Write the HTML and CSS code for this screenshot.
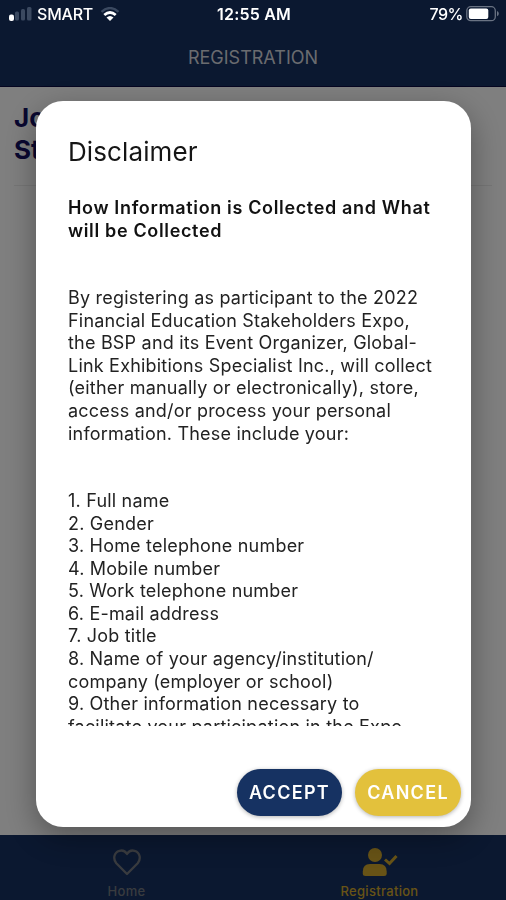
FILE: index.html
```html
<!DOCTYPE html>
<html lang="en">
<head>
  <meta charset="utf-8">
  <title>Registration</title>
  <link rel="stylesheet" href="styles.css">
</head>
<body>
<div class="status-bar">
  <div class="carrier">
    <svg class="signal" width="23" height="16" viewBox="0 0 23 16">
      <rect x="0" y="8.500" width="5" height="6.500" rx="2" fill="#fff"/>
      <rect x="6" y="5.500" width="4" height="9" rx="1.5" fill="#3b4960"/>
      <rect x="12" y="3" width="4" height="11.500" rx="1.5" fill="#3b4960"/>
      <rect x="18" y="1" width="4.5" height="13.500" rx="1.5" fill="#3b4960"/>
    </svg>
    <span class="carrier-name">SMART</span>
    <svg class="wifi" width="20" height="15" viewBox="0 0 20 15">
      <path d="M1.5 4.8Q10 -2.6 18.500 4.8" fill="none" stroke="#3b4960" stroke-width="2.400"/>
      <path d="M4.300 8Q10 3 15.700 8" fill="none" stroke="#fff" stroke-width="2.800"/>
      <path d="M6.500 10.500Q10 7.500 13.500 10.500L10 14z" fill="#fff"/>
    </svg>
  </div>
  <span class="time">12:55 AM</span>
  <div class="power">
    <span class="percent">79%</span>
    <svg width="33" height="16" viewBox="0 0 33 16">
      <rect x="0.800" y="0.700" width="28.500" height="14" rx="4" fill="none" stroke="#6a7383" stroke-width="1.300"/>
      <rect x="2.800" y="2.400" width="19.500" height="10.600" rx="2" fill="#fff"/>
      <path d="M31 5.100q1.800 .8 1.800 2.600t-1.800 2.600z" fill="#6a7383"/>
    </svg>
  </div>
</div>

<div class="app">
  <header class="header">REGISTRATION</header>
  <main class="page">
    <h2 class="page-title">Jo<br>St</h2>
  </main>
  <nav class="tabs">
    <a class="tab">
      <svg width="28" height="28" viewBox="0 0 28 28">
        <path d="M14 26L3.300 15.200C-.2 11 .8 4.300 6.500 2.800 9.800 1.900 12.400 3.400 14 6c1.600-2.600 4.200-4.100 7.500-3.200C27.200 4.300 28.200 11 24.700 15.200z" fill="none" stroke="currentColor" stroke-width="2.300" stroke-linejoin="round"/>
      </svg>
      <span>Home</span>
    </a>
    <a class="tab active">
      <svg width="36" height="28" viewBox="0 0 36 28">
        <circle cx="13" cy="7" r="7" fill="currentColor"/>
        <path d="M.8 25.500V23.500Q.8 16 8 16H17.500Q24.700 16 24.700 23.500V25.500Q24.700 28 22 28H3.500Q.8 28 .8 25.500z" fill="currentColor"/>
        <path d="M23 11.500L27.500 15.500L34.500 8" fill="none" stroke="currentColor" stroke-width="3"/>
      </svg>
      <span>Registration</span>
    </a>
  </nav>
</div>

<div class="overlay">
  <div class="popup">
    <h1>Disclaimer</h1>
    <div class="content">
      <p class="heading">How Information is Collected and What<br>will be Collected</p>
      <p>By registering as participant to the 2022<br>Financial Education Stakeholders Expo,<br>the BSP and its Event Organizer, Global-<br>Link Exhibitions Specialist Inc., will collect<br>(either manually or electronically), store,<br>access and/or process your personal<br>information. These include your:</p>
      <p>1. Full name<br>2. Gender<br>3. Home telephone number<br>4. Mobile number<br>5. Work telephone number<br>6. E-mail address<br>7. Job title<br>8. Name of your agency/institution/<br>company (employer or school)<br>9. Other information necessary to<br>facilitate your participation in the Expo</p>
    </div>
    <div class="buttons">
      <button class="accept">ACCEPT</button>
      <button class="cancel">CANCEL</button>
    </div>
  </div>
</div>
</body>
</html>
```

FILE: styles.css
```css
* {
    box-sizing: border-box;
}

body {
    margin: 0;
    height: 900px;
    overflow: hidden;
    font-family: Inter, "Liberation Sans", sans-serif;
    background-color: #163060;
}

.app {
    height: 900px;
    display: flex;
    flex-direction: column;
}

/* stays above the dimmed page */
.status-bar {
    position: fixed;
    top: 0;
    left: 0;
    right: 0;
    z-index: 2;
    height: 28px;
    padding: 0 7px 0 9px;
    display: grid;
    grid-template-columns: 1fr auto 1fr;
    align-items: center;
    color: #ffffff;
    font-size: 16px;
    font-weight: 500;
}

.carrier,
.power {
    display: flex;
    align-items: center;
}

.carrier-name {
    margin: 0 7px 0 5px;
    letter-spacing: -0.2px;
}

.time {
    font-weight: 600;
    letter-spacing: 0.2px;
}

.power {
    justify-content: flex-end;
    gap: 3px;
}

.percent {
    letter-spacing: -0.5px;
}

.header {
    height: 87px;
    padding-top: 28px;
    display: flex;
    align-items: center;
    justify-content: center;
    background-color: #163060;
    border-bottom: 1px solid #0a0a40;
    color: #d4d7de;
    font-size: 18px;
}

.page {
    flex: 1;
    padding: 15px 14px;
    background-color: #ffffff;
}

.page-title {
    margin: 0;
    height: 84px;
    border-bottom: 1px solid #ececec;
    color: #120f60;
    font-size: 26px;
    font-weight: 700;
    line-height: 32px;
}

.tabs {
    height: 65px;
    flex-shrink: 0;
    display: flex;
    background-color: #163060;
}

.tab {
    flex: 1;
    padding-top: 13px;
    display: flex;
    flex-direction: column;
    align-items: center;
    gap: 7px;
    color: #73777e;
    font-size: 13px;
    font-weight: 500;
    letter-spacing: 0.3px;
    line-height: 17px;
}

.tab svg {
    flex-shrink: 0;
}

.tab.active {
    color: #d0a72c;
}

.overlay {
    position: fixed;
    top: 0;
    left: 0;
    width: 100%;
    height: 100%;
    padding: 101px 35px 73px 36px;
    background-color: rgba(0, 0, 0, 0.5);
}

.popup {
    height: 726px;
    padding: 32px 32px 11px;
    display: flex;
    flex-direction: column;
    background-color: #ffffff;
    border-radius: 27px;
    box-shadow: 0 10px 32px rgba(0, 0, 0, 0.35);
}

.popup h1 {
    margin: 0 0 26px;
    color: #151515;
    font-size: 26px;
    font-weight: 400;
    letter-spacing: 0.1px;
    line-height: 38px;
}

.content {
    height: 529px;
    flex-shrink: 0;
    overflow: hidden;
    white-space: nowrap;
    color: #222222;
    font-size: 18px;
    letter-spacing: 0.2px;
    line-height: 22.56px;
}

.content p {
    margin: 0 0 45px;
}

.content .heading {
    color: #111111;
    font-weight: 600;
    letter-spacing: 0.65px;
}

.buttons {
    margin: auto -22px 0 0;
    display: flex;
    justify-content: flex-end;
    gap: 13px;
}

.buttons button {
    width: 106px;
    height: 47px;
    padding: 0;
    border: none;
    border-radius: 24px;
    box-shadow: 0 1px 4px rgba(0, 0, 0, 0.3);
    color: #ffffff;
    font-family: inherit;
    font-size: 18px;
    font-weight: 600;
    letter-spacing: 1.3px;
}

.buttons .accept {
    width: 105px;
    background-color: #163262;
}

.buttons .cancel {
    background-color: #e3c13c;
}
```
